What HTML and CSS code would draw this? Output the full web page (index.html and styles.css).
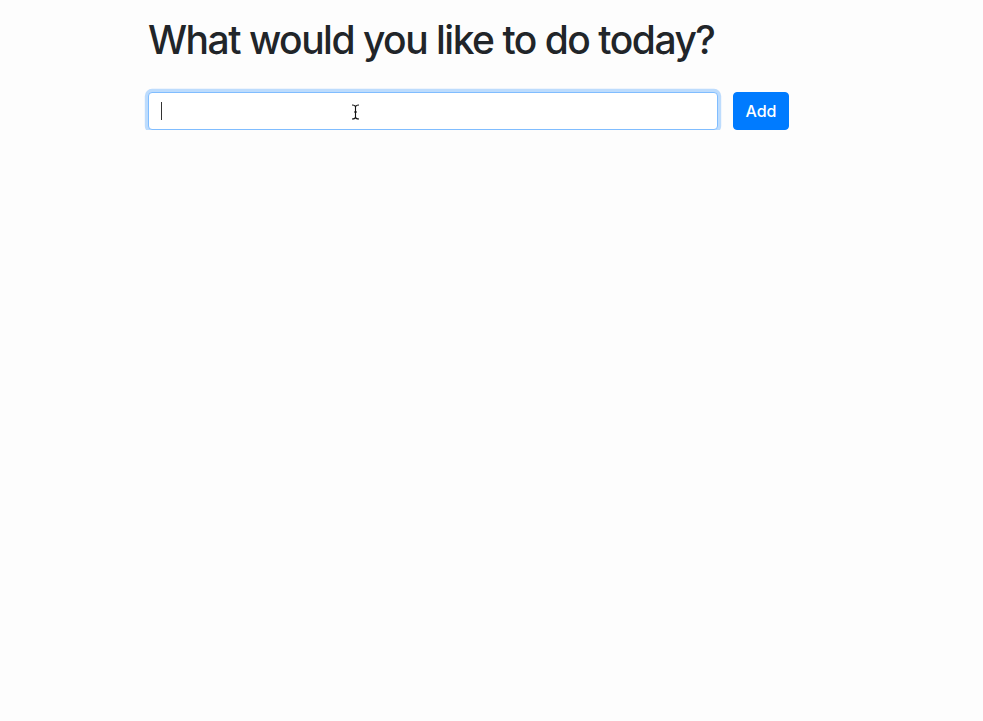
FILE: index.html
```html
<!DOCTYPE html>
<html>
<head>
<meta charset="utf-8">
<link rel="stylesheet" href="styles.css">
</head>
<body>
<div class="container">
  <h1 class="title">What would you like to do today?</h1>
  <form class="add-form">
    <div class="input-wrap">
      <input class="form-control" type="text">
      <span class="caret"></span>
      <svg class="ibeam" width="9" height="16" viewBox="0 0 9 16">
        <path d="M1 1 Q4.5 1 4.5 3 Q4.5 1 8 1 M4.5 3 V13 M1 15 Q4.5 15 4.5 13 Q4.5 15 8 15 M3 8 H6" fill="none" stroke="#fff" stroke-width="2.6"/>
        <path d="M1 1 Q4.5 1 4.5 3 Q4.5 1 8 1 M4.5 3 V13 M1 15 Q4.5 15 4.5 13 Q4.5 15 8 15 M3 8 H6" fill="none" stroke="#111" stroke-width="1.1"/>
      </svg>
    </div>
    <button class="btn" type="button">Add</button>
  </form>
</div>
</body>
</html>
```
FILE: styles.css
```css
html, body {
  margin: 0;
  padding: 0;
  background: #fdfdfd;
}
body {
  font-family: Inter, Roboto, "Helvetica Neue", Arial, sans-serif;
  color: #212529;
}
.container {
  padding: 16px 0 0 148px;
}
.title {
  margin: 0 0 28px 0;
  font-size: 39px;
  font-weight: 500;
  line-height: 48px;
  letter-spacing: -1.5px;
}
.add-form {
  display: flex;
  gap: 15px;
  align-items: center;
}
.input-wrap {
  position: relative;
}
.form-control {
  display: block;
  box-sizing: border-box;
  width: 570px;
  height: 38px;
  padding: 6px 12px;
  font-size: 16px;
  font-family: inherit;
  color: #495057;
  background: #fff;
  border: 1px solid #80bdff;
  border-radius: 4px;
  box-shadow: 0 0 0 3.2px rgba(0, 123, 255, 0.25);
  outline: none;
}
.caret {
  position: absolute;
  left: 13px;
  top: 10px;
  width: 1px;
  height: 18px;
  background: #333;
}
.ibeam {
  position: absolute;
  left: 203px;
  top: 12px;
}
.btn {
  box-sizing: border-box;
  height: 38px;
  width: 56px;
  padding: 0;
  font-family: Inter, Roboto, sans-serif;
  font-size: 16px;
  font-weight: 500;
  color: #fff;
  background: #007bff;
  border: 1px solid #007bff;
  border-radius: 4px;
}
```
